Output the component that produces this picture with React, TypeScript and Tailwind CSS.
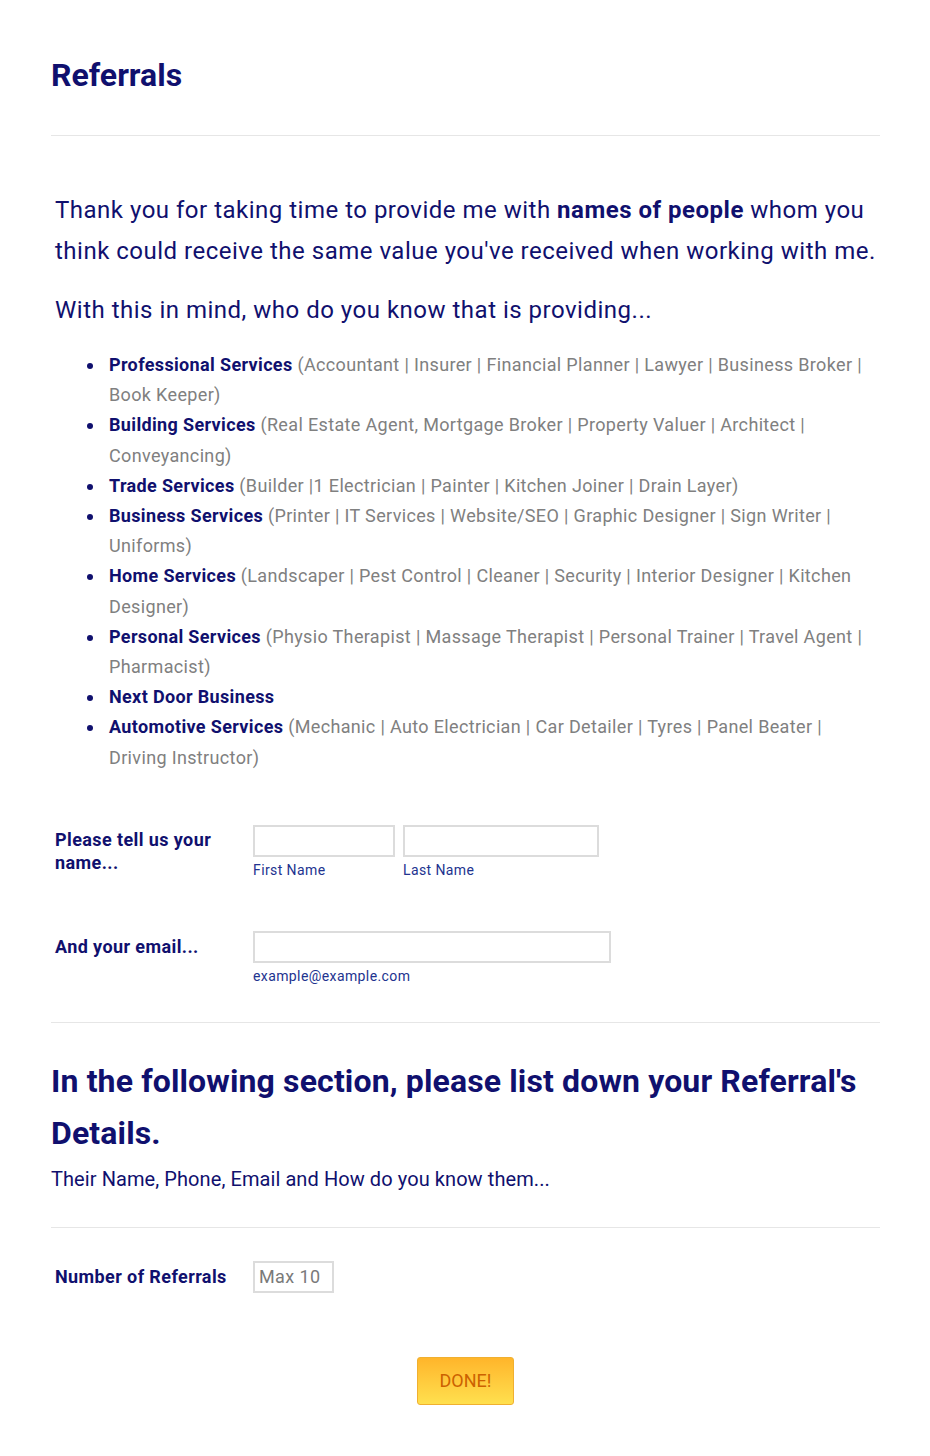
import React from "react";

const items: { t: string; d?: string }[] = [
  { t: "Professional Services", d: "(Accountant | Insurer | Financial Planner | Lawyer | Business Broker | Book Keeper)" },
  { t: "Building Services", d: "(Real Estate Agent, Mortgage Broker | Property Valuer | Architect | Conveyancing)" },
  { t: "Trade Services", d: "(Builder |1 Electrician | Painter | Kitchen Joiner | Drain Layer)" },
  { t: "Business Services", d: "(Printer | IT Services | Website/SEO | Graphic Designer | Sign Writer | Uniforms)" },
  { t: "Home Services", d: "(Landscaper | Pest Control | Cleaner | Security | Interior Designer | Kitchen Designer)" },
  { t: "Personal Services", d: "(Physio Therapist | Massage Therapist | Personal Trainer | Travel Agent | Pharmacist)" },
  { t: "Next Door Business" },
  { t: "Automotive Services", d: "(Mechanic | Auto Electrician | Car Detailer | Tyres | Panel Beater | Driving Instructor)" },
];

export default function App() {
  return (
    <div className="min-h-[1456px] bg-white font-['Roboto',sans-serif] text-[#10106e]">
      <div className="mx-[51px] w-[829px] pt-[56px]">
        <h1 className="text-[32px] font-bold leading-[38px]">Referrals</h1>
        <div className="mt-[41px] h-px bg-[#e6e6e6]" />

        <div className="px-[4px] pt-[54px]">
          <p className="text-[24px] leading-[41px] tracking-[0.5px]">
            Thank you for taking time to provide me with <b className="font-bold">names of people</b> whom you think could receive the same value you've received when working with me.
          </p>
          <p className="mt-[18px] text-[24px] leading-[41px] tracking-[0.5px]">With this in mind, who do you know that is providing...</p>

          <ul className="mt-[19px] list-disc pl-[50px] text-[18px] leading-[30.2px] tracking-[0.35px] marker:text-[#10106e]">
            {items.map((it) => (
              <li key={it.t} className="pl-[4px]">
                <span className="font-bold">{it.t}</span>
                {it.d ? <span className="text-[#808080]"> {it.d}</span> : null}
              </li>
            ))}
          </ul>
        </div>

        <div className="mt-[52px] grid grid-cols-[198px_1fr] pl-[4px]">
          <div className="pt-[3px] text-[18px] font-bold leading-[23px] tracking-[0.4px]">
            Please tell us your
            <br />
            name...
          </div>
          <div className="flex gap-[8px]">
            <div className="flex flex-col">
              <div className="h-[32px] w-[142px] border-2 border-[#dcdcdc] bg-white" />
              <span className="mt-[4px] text-[14px] leading-[18px] tracking-[0.4px] text-[#22338f]">First Name</span>
            </div>
            <div className="flex flex-col">
              <div className="h-[32px] w-[196px] border-2 border-[#dcdcdc] bg-white" />
              <span className="mt-[4px] text-[14px] leading-[18px] tracking-[0.4px] text-[#22338f]">Last Name</span>
            </div>
          </div>
        </div>

        <div className="mt-[52px] grid grid-cols-[198px_1fr] pl-[4px]">
          <div className="pt-[4px] text-[18px] font-bold leading-[23px] tracking-[0.4px]">And your email...</div>
          <div className="flex flex-col">
            <div className="h-[32px] w-[358px] border-2 border-[#dcdcdc] bg-white" />
            <span className="mt-[4px] text-[14px] leading-[18px] tracking-[0.4px] text-[#22338f]">example@example.com</span>
          </div>
        </div>

        <div className="mt-[37px] h-px bg-[#e6e6e6]" />

        <h2 className="mt-[32px] text-[32px] font-bold leading-[52px] tracking-[0.13px]">
          In the following section, please list down your Referral's Details.
        </h2>
        <p className="mt-[6px] text-[20px] leading-[28px] tracking-[0.08px]">Their Name, Phone, Email and How do you know them...</p>

        <div className="mt-[34px] h-px bg-[#e6e6e6]" />

        <div className="mt-[33px] grid grid-cols-[198px_1fr] items-center pl-[4px]">
          <div className="text-[18px] font-bold leading-[23px] tracking-[0.4px]">Number of Referrals</div>
          <div className="flex h-[32px] w-[81px] items-center border-2 border-[#dcdcdc] px-[4px] text-[18px] tracking-[0.4px] text-[#7a7a7a]">
            Max 10
          </div>
        </div>

        <div className="mt-[64px] flex justify-center">
          <button className="h-[48px] w-[97px] rounded-[3px] border border-[#f0b030] bg-gradient-to-b from-[#ffb52a] to-[#ffe04e] text-[18px] text-[#cc6200]">
            DONE!
          </button>
        </div>
      </div>
    </div>
  );
}
